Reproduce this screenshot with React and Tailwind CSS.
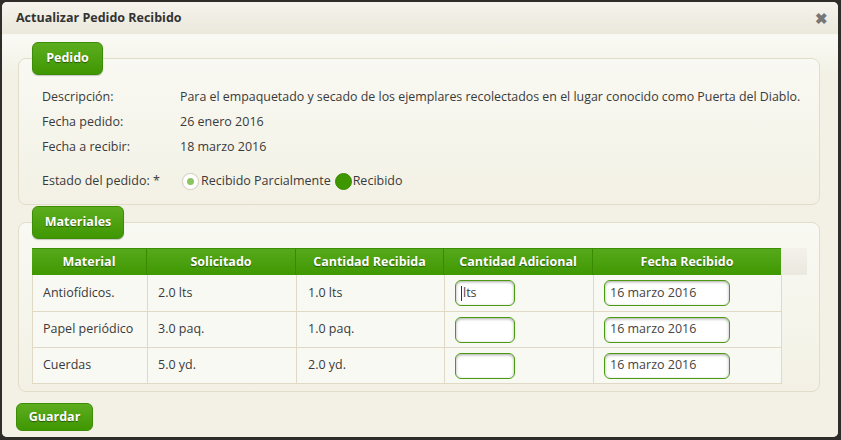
import React from "react";

const font = { fontFamily: '"Open Sans", "Segoe UI", sans-serif' };

function Legend({ children, w }) {
  return (
    <div
      className={`relative z-10 ml-[14px] h-[33px] ${w} flex items-center justify-center rounded-[6px] border border-[#3d8c06] bg-gradient-to-b from-[#5cad1d] to-[#3f9700] text-[12.5px] font-bold text-white [text-shadow:0_1px_1px_rgba(0,0,0,0.45)] shadow-[0_1px_1px_rgba(0,0,0,0.2)]`}
    >
      {children}
    </div>
  );
}

function Input({ value, w, cursor }) {
  return (
    <div
      className={`${w} h-[26px] rounded-[6px] border border-[#4b9a12] bg-white shadow-[inset_0_1px_3px_rgba(0,0,0,0.35)] flex items-center px-[5px] text-[12.5px] text-[#444]`}
    >
      {cursor && <span className="w-px h-[15px] bg-[#333] mr-[1px]" />}
      {value}
    </div>
  );
}

const rows = [
  ["Antiofídicos.", "2.0 lts", "1.0 lts", "lts", true, "h-[37px]"],
  ["Papel periódico", "3.0 paq.", "1.0 paq.", "", false, "h-[36px]"],
  ["Cuerdas", "5.0 yd.", "2.0 yd.", "", false, "h-[36px]"],
];

export default function App() {
  return (
    <div className="w-[841px] h-[440px] bg-[#2e2d29] pt-[2px] pl-[2px] pr-[3px] pb-[3px]" style={font}>
      <div className="w-full h-full rounded-[5px] bg-[#f3f1e5] overflow-hidden flex flex-col text-[#3a3a3a]">
        <div className="h-[33px] shrink-0 flex items-center justify-between pl-[14px] pr-[10px] bg-gradient-to-b from-[#f5f3ec] to-[#ebe8dc] border-b border-[#f7f6f0]">
          <span className="text-[12.5px] font-bold text-[#333]">Actualizar Pedido Recibido</span>
          <span className="text-[#777] text-[15px] font-bold leading-none">✖</span>
        </div>
        <div className="flex-1 bg-gradient-to-b from-[#fafaf5] to-[#f3f1e5] to-[40px]">
          <div className="pt-[7px] pl-[16px] pr-[16px]">
            <Legend w="w-[71px]">Pedido</Legend>
            <div className="-mt-[17px] w-[802px] h-[147px] rounded-[8px] border border-[#e2ddc8] bg-gradient-to-b from-[#f9f9f3] to-[#f3f1e5] pl-[23px] pt-[26px] text-[12.5px] whitespace-nowrap">
              <div className="flex h-[25px] items-center">
                <span className="w-[138px]">Descripción:</span>
                <span className="text-[12.4px]">Para el empaquetado y secado de los ejemplares recolectados en el lugar conocido como Puerta del Diablo.</span>
              </div>
              <div className="flex h-[25px] items-center">
                <span className="w-[138px]">Fecha pedido:</span>
                <span>26 enero 2016</span>
              </div>
              <div className="flex h-[25px] items-center">
                <span className="w-[138px]">Fecha a recibir:</span>
                <span>18 marzo 2016</span>
              </div>
              <div className="flex h-[40px] items-center pt-[3px]">
                <span className="w-[140px]">Estado del pedido: *</span>
                <span className="w-[17px] h-[17px] rounded-full border border-[#d6d2c2] bg-white flex items-center justify-center shadow-[0_0_1px_rgba(0,0,0,0.1)]">
                  <span className="w-[7px] h-[7px] rounded-full bg-[#8cc461]" />
                </span>
                <span className="ml-[2px]">Recibido Parcialmente</span>
                <span className="ml-[4px] w-[17px] h-[17px] rounded-full bg-[#3f9700] border border-[#3a8b00]" />
                <span className="ml-[1px]">Recibido</span>
              </div>
            </div>
          </div>
          <div className="pt-[1px] pl-[16px]">
            <Legend w="w-[92px]">Materiales</Legend>
            <div className="-mt-[17px] w-[802px] h-[170px] rounded-[8px] border border-[#e2ddc8] bg-gradient-to-b from-[#f9f9f3] to-[#f3f1e5] pl-[13px] pt-[25px]">
              <div className="flex">
                <div className="flex h-[27px] bg-gradient-to-b from-[#56a91a] to-[#3f9800] border-t border-[#3d8d06] text-white text-[12.5px] font-bold [text-shadow:0_1px_1px_rgba(0,0,0,0.45)]">
                  <div className="w-[115px] flex items-center justify-center border-r border-[#3a8a00]">Material</div>
                  <div className="w-[149px] flex items-center justify-center border-r border-[#3a8a00]">Solicitado</div>
                  <div className="w-[148px] flex items-center justify-center border-r border-[#3a8a00]">Cantidad Recibida</div>
                  <div className="w-[149px] flex items-center justify-center border-r border-[#3a8a00]">Cantidad Adicional</div>
                  <div className="w-[188px] flex items-center justify-center">Fecha Recibido</div>
                </div>
                <div className="w-[26px] h-[27px] bg-gradient-to-b from-[#f3f1ea] to-[#ebe8df]" />
              </div>
              <div className="w-[750px] border-l border-[#e0d9c5] bg-[#f9f9f4] text-[12.5px] text-[#3a3a3a]">
                {rows.map((r, i) => (
                  <div key={i} className={`flex ${r[5]} border-b border-[#e0d9c5]`}>
                    <div className="w-[115px] flex items-center pl-[10px] border-r border-[#e0d9c5]">{r[0]}</div>
                    <div className="w-[149px] flex items-center pl-[10px] border-r border-[#e0d9c5]">{r[1]}</div>
                    <div className="w-[148px] flex items-center pl-[11px] border-r border-[#e0d9c5]">{r[2]}</div>
                    <div className="w-[149px] flex items-center pl-[10px] border-r border-[#e0d9c5]">
                      <Input w="w-[60px]" value={r[3]} cursor={r[4]} />
                    </div>
                    <div className="w-[188px] flex items-center pl-[10px] border-r border-[#e0d9c5]">
                      <Input w="w-[126px]" value="16 marzo 2016" />
                    </div>
                  </div>
                ))}
              </div>
            </div>
          </div>
          <div className="pt-[11px] pl-[14px]">
            <div className="w-[77px] h-[28px] flex items-center justify-center rounded-[6px] border border-[#3d8c06] bg-gradient-to-b from-[#5cad1d] to-[#3f9700] text-[12.5px] font-bold text-white [text-shadow:0_1px_1px_rgba(0,0,0,0.45)]">
              Guardar
            </div>
          </div>
        </div>
      </div>
    </div>
  );
}
